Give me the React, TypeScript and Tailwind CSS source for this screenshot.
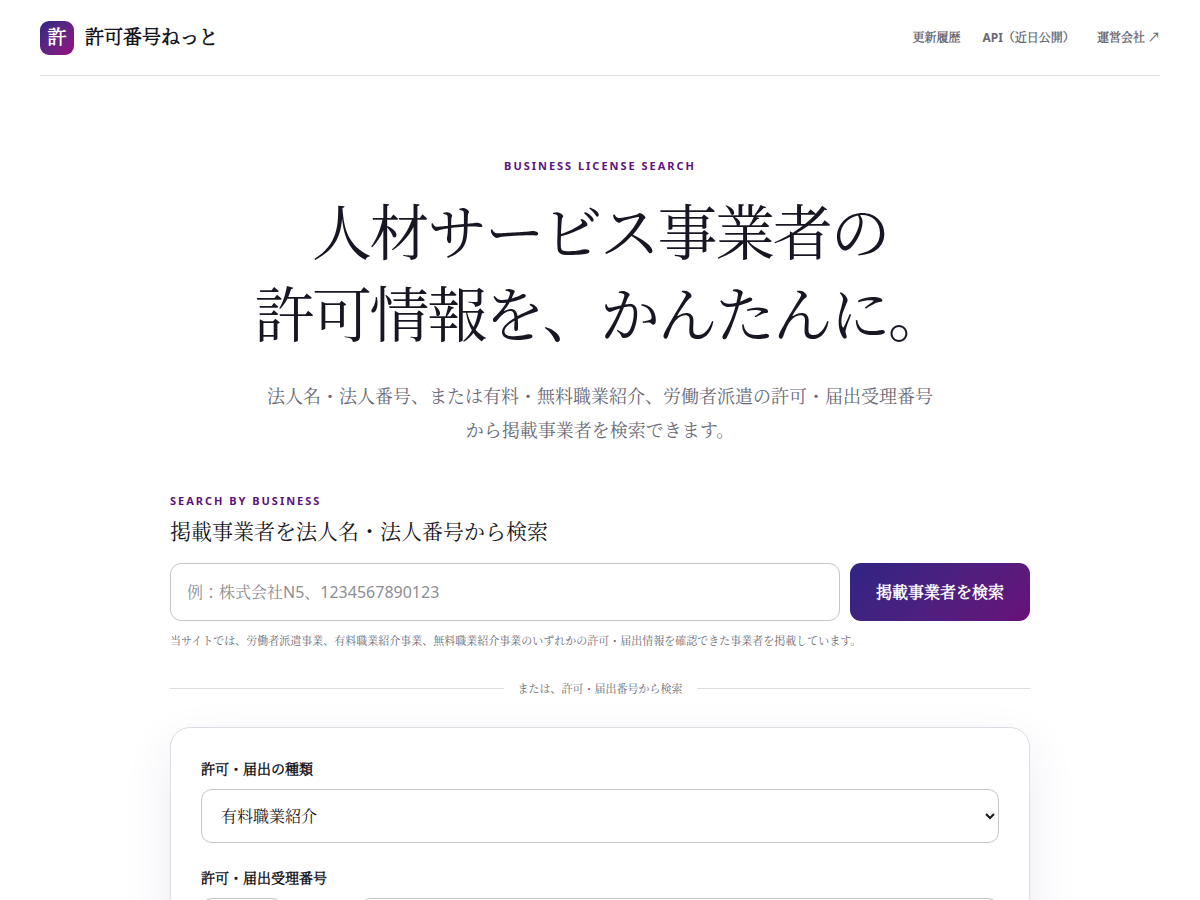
import type { ReactNode } from "react";

const NAV_LINKS = ["更新履歴", "API（近日公開）", "運営会社 ↗"];
const LICENSE_TYPES = ["有料職業紹介", "無料職業紹介", "労働者派遣"];

const BOLD = "font-['Noto_Sans','Noto_Serif_CJK_JP_Light',serif] font-bold";

function Eyebrow({ children }: { children: ReactNode }) {
  return (
    <p className="text-[11px] leading-4 font-bold tracking-[0.18em] text-[#5b1380]">
      {children}
    </p>
  );
}

function Header() {
  return (
    <header className="mx-10 flex items-center justify-between border-b border-[#dcdce2] pt-[21px] pb-5">
      <a href="#" className={`flex items-start gap-[11px] text-[19px] ${BOLD}`}>
        <span className="size-[34px] rounded-[9px] bg-linear-135 from-[#2f2483] to-[#94047f] text-center leading-8 text-white">
          許
        </span>
        <span className="leading-8">許可番号ねっと</span>
      </a>
      <nav className={`flex gap-[22px] text-[12px] leading-5 text-[#696975] ${BOLD}`}>
        {NAV_LINKS.map((label) => (
          <a key={label} href="#">
            {label}
          </a>
        ))}
      </nav>
    </header>
  );
}

function Hero() {
  return (
    <section className="flex flex-col items-center px-6 pt-[82px] text-center">
      <Eyebrow>BUSINESS LICENSE SEARCH</Eyebrow>
      <h1 className="mt-[17px] text-[60px] leading-[82px] tracking-[-0.04em]">
        人材サービス事業者の
        <br />
        許可情報を、かんたんに。
      </h1>
      <p className="mt-6 max-w-[680px] text-[18px] leading-[34px] text-[#696975]">
        法人名・法人番号、または有料・無料職業紹介、労働者派遣の許可・届出受理番号から掲載事業者を検索できます。
      </p>
    </section>
  );
}

function BusinessSearch() {
  return (
    <form onSubmit={(e) => e.preventDefault()}>
      <Eyebrow>SEARCH BY BUSINESS</Eyebrow>
      <h2 className="mt-1 text-[21px] leading-[36px]">
        <label htmlFor="business">掲載事業者を法人名・法人番号から検索</label>
      </h2>
      <div className="mt-[14px] flex gap-[10px]">
        <input
          id="business"
          type="text"
          placeholder="例：株式会社N5、1234567890123"
          className="h-[58px] min-w-0 flex-1 rounded-[11px] border border-[#c4c4cc] bg-white px-4 text-[16px] placeholder:text-[#8e8e93]"
        />
        <button
          type="submit"
          className={`h-[58px] w-[180px] rounded-[11px] bg-linear-135 from-[#2f2483] to-[#68107a] text-[16px] text-white ${BOLD}`}
        >
          掲載事業者を検索
        </button>
      </div>
      <p className="mt-[10px] text-[11px] leading-5 text-[#696975]">
        当サイトでは、労働者派遣事業、有料職業紹介事業、無料職業紹介事業のいずれかの許可・届出情報を確認できた事業者を掲載しています。
      </p>
    </form>
  );
}

function LicenseSearch() {
  return (
    <form
      onSubmit={(e) => e.preventDefault()}
      className="rounded-[20px] border border-[#dcdce2] bg-white p-[30px] shadow-[0_18px_50px_rgba(47,36,131,0.09)]"
    >
      <label htmlFor="kind" className={`block text-[14px] leading-[22px] ${BOLD}`}>
        許可・届出の種類
      </label>
      <select
        id="kind"
        className="mt-[9px] h-[54px] w-full rounded-[11px] border border-[#c4c4cc] bg-white pl-[15px] text-[16px]"
      >
        {LICENSE_TYPES.map((t) => (
          <option key={t}>{t}</option>
        ))}
      </select>
      <label htmlFor="number" className={`mt-6 block text-[14px] leading-[22px] ${BOLD}`}>
        許可・届出受理番号
      </label>
      <div className="mt-[9px] flex items-center gap-[77px]">
        <input
          aria-label="都道府県番号"
          inputMode="numeric"
          className="h-[54px] w-[82px] rounded-[11px] border border-[#c4c4cc] bg-white px-4 text-[16px]"
        />
        <input
          id="number"
          inputMode="numeric"
          className="h-[54px] min-w-0 flex-1 rounded-[11px] border border-[#c4c4cc] bg-white px-4 text-[16px]"
        />
      </div>
    </form>
  );
}

export default function App() {
  return (
    <div
      lang="ja"
      className="min-h-screen bg-white pb-20 font-['Noto_Sans','Noto_Serif_CJK_JP',serif] text-[#171622]"
    >
      <Header />
      <main>
        <Hero />
        <div className="mx-auto mt-[46px] w-full max-w-[860px]">
          <BusinessSearch />
          <div className="mt-[28px] mb-[29px] flex items-center gap-[14px] text-[11px] leading-[19px] text-[#696975]">
            <span className="h-px flex-1 bg-[#dcdce2]" />
            または、許可・届出番号から検索
            <span className="h-px flex-1 bg-[#dcdce2]" />
          </div>
          <LicenseSearch />
        </div>
      </main>
    </div>
  );
}
